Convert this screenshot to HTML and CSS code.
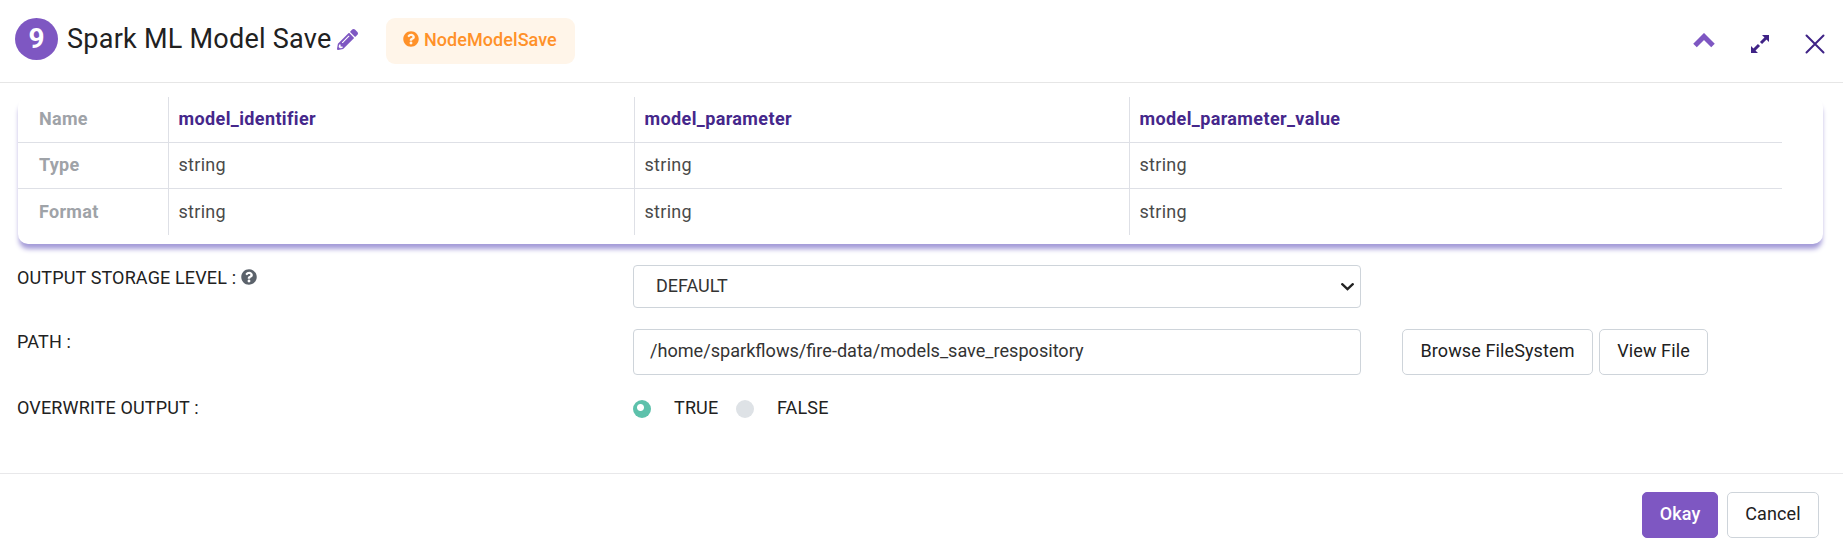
FILE: index.html
```html
<!DOCTYPE html>
<html lang="en">
<head>
<meta charset="utf-8">
<title>Spark ML Model Save</title>
<link rel="stylesheet" href="styles.css">
</head>
<body>
<div class="dialog">
  <header class="header">
    <span class="number">9</span>
    <h1 class="title">Spark ML Model Save</h1>
    <svg class="pencil" viewBox="0 0 512 512"><path fill="currentColor" d="M497.900 142.100l-46.100 46.100c-4.700 4.700-12.300 4.700-17 0l-111-111c-4.700-4.700-4.700-12.300 0-17l46.100-46.100c18.700-18.700 49.100-18.700 67.900 0l60.100 60.100c18.800 18.700 18.800 49.100 0 68zM284.200 99.800L21.600 362.400.4 483.900c-2.900 16.400 11.400 30.600 27.800 27.800l121.500-21.300 262.600-262.600c4.700-4.700 4.700-12.300 0-17l-111-111c-4.800-4.700-12.400-4.700-17.100 0zM124.100 339.900c-5.500-5.500-5.500-14.300 0-19.800l154-154c5.500-5.500 14.300-5.500 19.800 0s5.500 14.300 0 19.800l-154 154c-5.500 5.500-14.300 5.500-19.800 0zM88 424h48v36.300l-64.500 11.300-31.100-31.100L51.700 376H88v48z"/></svg>
    <div class="badge">
      <svg class="help" viewBox="0 0 512 512"><path fill="currentColor" d="M504 256c0 137-111 248-248 248S8 393 8 256 119 8 256 8s248 111 248 248zM262.700 90c-54.500 0-89.300 23-116.500 63.800-3.500 5.300-2.400 12.400 2.700 16.300l34.700 26.300c5.200 3.900 12.600 3 16.700-2.100 17.900-22.700 30.100-35.800 57.300-35.800 20.400 0 45.700 13.100 45.700 33 0 15-12.400 22.700-32.500 34C247.100 238.500 216 254.900 216 296v4c0 6.600 5.400 12 12 12h56c6.600 0 12-5.400 12-12v-1.300c0-28.500 83.200-29.600 83.200-106.700 0-58-60.200-102-116.500-102zM256 338c-25.400 0-46 20.600-46 46s20.600 46 46 46 46-20.600 46-46-20.600-46-46-46z"/></svg>
      <span class="badge-text">NodeModelSave</span>
    </div>
    <div class="tools">
      <svg class="chevron" viewBox="0 0 22 15"><path d="M2 12.500 11 3.500l9 9"/></svg>
      <svg class="expand" viewBox="0 0 20 20"><path class="head" d="M12 1h7v7zM1 12v7h7z"/><path class="shaft" d="M17 3l-6 6M9 11l-6 6"/></svg>
      <svg class="close" viewBox="0 0 20 20"><path d="M1.500 1.500l17 17M18.500 1.500l-17 17"/></svg>
    </div>
  </header>
  <main class="body">
    <section class="schema">
      <table class="grid">
        <colgroup><col class="c-key"><col class="c-a"><col class="c-b"><col class="c-c"></colgroup>
        <tr><th>Name</th><td class="col">model_identifier</td><td class="col">model_parameter</td><td class="col">model_parameter_value</td></tr>
        <tr><th>Type</th><td>string</td><td>string</td><td>string</td></tr>
        <tr><th>Format</th><td>string</td><td>string</td><td>string</td></tr>
      </table>
    </section>
    <div class="form">
      <div class="row row-select">
        <div class="label"><span>OUTPUT STORAGE LEVEL :</span><svg class="help grey" viewBox="0 0 512 512"><path fill="currentColor" d="M504 256c0 137-111 248-248 248S8 393 8 256 119 8 256 8s248 111 248 248zM262.700 90c-54.500 0-89.300 23-116.500 63.800-3.500 5.300-2.400 12.400 2.700 16.300l34.700 26.300c5.200 3.900 12.600 3 16.700-2.100 17.900-22.700 30.100-35.800 57.300-35.800 20.400 0 45.700 13.100 45.700 33 0 15-12.400 22.700-32.500 34C247.100 238.500 216 254.900 216 296v4c0 6.600 5.400 12 12 12h56c6.600 0 12-5.400 12-12v-1.300c0-28.500 83.200-29.600 83.200-106.700 0-58-60.200-102-116.500-102zM256 338c-25.400 0-46 20.600-46 46s20.600 46 46 46 46-20.600 46-46-20.600-46-46-46z"/></svg></div>
        <div class="field select"><span>DEFAULT</span><svg class="caret" viewBox="0 0 13 8"><path d="M1.200 1.200l5.300 5 5.300-5"/></svg></div>
      </div>
      <div class="row row-path">
        <div class="label"><span>PATH :</span></div>
        <div class="field input"><span>/home/sparkflows/fire-data/models_save_respository</span></div>
        <div class="actions"><button class="btn browse">Browse FileSystem</button><button class="btn view">View File</button></div>
      </div>
      <div class="row row-radio">
        <div class="label"><span>OVERWRITE OUTPUT :</span></div>
        <span class="radio on"></span><span class="opt opt-true">TRUE</span>
        <span class="radio"></span><span class="opt">FALSE</span>
      </div>
    </div>
  </main>
  <footer class="footer">
    <button class="btn primary">Okay</button>
    <button class="btn cancel">Cancel</button>
  </footer>
</div>
</body>
</html>
```

FILE: styles.css
```css
* { box-sizing: border-box; }
body { margin: 0; background: #fff; color: #212121; font: 400 18px/27px Roboto, sans-serif; }
.dialog { display: flex; flex-direction: column; width: 1843px; height: 553px; overflow: hidden; }
svg { display: block; flex: none; }

.header { display: flex; align-items: flex-start; height: 83px; padding: 18px 13px 0 15px; border-bottom: 1px solid #e6e6e6; flex: none; }
.number { width: 43px; height: 42px; border-radius: 50%; background: #7e57c2; color: #fff; font-size: 28px; font-weight: 700; line-height: 42px; text-align: center; }
.title { width: 271px; margin: 0 0 0 9px; font-size: 27px; font-weight: 400; letter-spacing: .25px; line-height: 42px; white-space: nowrap; }
.pencil { width: 21px; height: 21px; margin: 11px 28px 0 -1px; color: #7e57c2; }
.badge { display: flex; align-items: center; gap: 5px; width: 189px; height: 46px; padding: 0 17px 4px; border-radius: 9px; background: #fff5e9; color: #ff9129; }
.badge-text { font-weight: 500; letter-spacing: .06px; }
.help { width: 16px; height: 16px; }
.tools { display: flex; margin-left: auto; color: #45278b; fill: none; }
.chevron { width: 22px; height: 15px; margin-top: 15px; stroke: #7e57c2; stroke-width: 5; }
.expand { width: 20px; height: 20px; margin: 16px 0 0 35px; }
.head { fill: #3f2386; }
.shaft { stroke: #3f2386; stroke-width: 3; }
.close { width: 20px; height: 20px; margin: 16px 5px 0 35px; stroke: #3f2386; stroke-width: 2; stroke-linecap: round; }

.body { flex: 1; padding: 14px 20px 0 17px; }
.schema { height: 147px; margin-left: 1px; border-radius: 10px; box-shadow: 0 6px 5px -1px #a49bd8; background: #fff; }
.grid { width: 1764px; border-collapse: collapse; table-layout: fixed; }
.c-key { width: 150px; }
.c-a { width: 466px; }
.c-b { width: 495px; }
.grid th, .grid td { height: 46px; padding: 0 0 2px 10px; border-top: 1px solid #dee0e6; border-left: 1px solid #dee0e6; text-align: left; letter-spacing: .3px; line-height: 27px; color: #4a4a4a; }
.grid tr:first-child > * { height: 45px; border-top: 0; }
.grid th { padding-left: 21px; border-left: 0; color: #9fa3a8; font-weight: 700; }
.grid tr:last-child > * { height: 47px; padding-bottom: 0; }
.grid .col { color: #45278b; font-weight: 700; letter-spacing: .38px; }

.form { padding-top: 21px; }
.row { display: flex; align-items: flex-start; }
.row-select { height: 64px; }
.row-path { height: 71px; }
.label { display: flex; align-items: center; width: 616px; height: 24px; letter-spacing: .14px; }
.grey { margin-left: 5px; color: #5b626b; }
.field { display: flex; align-items: center; width: 728px; border: 1px solid #ced4da; border-radius: 4px; color: #333; }
.select { justify-content: space-between; height: 43px; padding: 0 6px 2px 22px; }
.caret { width: 13px; height: 8px; margin-top: 2px; fill: none; stroke: #222; stroke-width: 2.3; stroke-linecap: round; }
.input { height: 46px; padding: 0 16px 4px; font-size: 18.1px; }
.actions { display: flex; gap: 6px; margin-left: 41px; }
.btn { height: 46px; padding: 0 0 3px; border: 1px solid #ced4da; border-radius: 5px; background: #fff; color: #212121; font: 400 18px/27px Roboto, sans-serif; letter-spacing: .12px; white-space: nowrap; }
.browse { width: 191px; }
.view { width: 109px; }
.radio { width: 18px; height: 18px; border-radius: 50%; background: #dee2e6; }
.on { background: radial-gradient(circle at 7.500px 7.500px, #fff 3px, #5dc1ab 4px); }
.opt { margin-left: 23px; line-height: 16px; letter-spacing: .14px; }
.opt-true { width: 62px; }
.row-radio .label { height: 14px; }

.footer { display: flex; gap: 9px; justify-content: flex-end; height: 80px; padding: 18px 24px 0 0; border-top: 1px solid #e8e8ea; flex: none; }
.primary { width: 76px; border-color: #7e57c2; background: #7e57c2; color: #fff; font-weight: 500; }
.cancel { width: 92px; }
```
